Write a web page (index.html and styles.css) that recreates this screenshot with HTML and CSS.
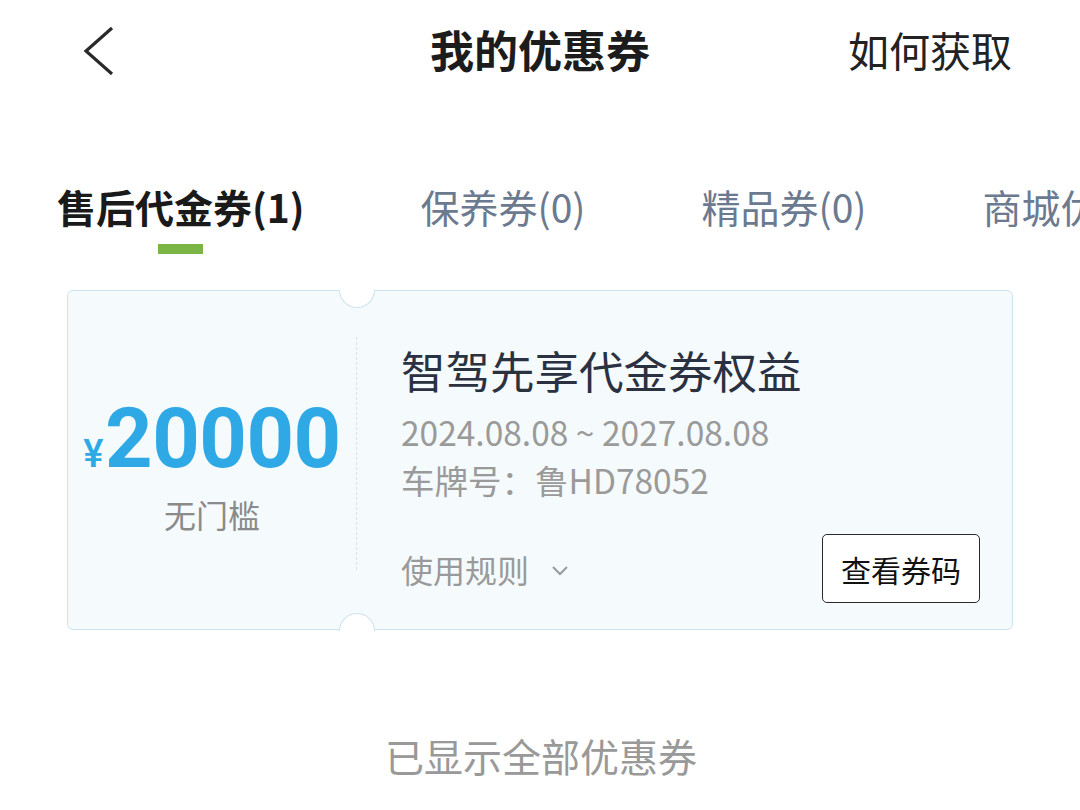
FILE: index.html
```html
<!DOCTYPE html>
<html lang="zh-CN">
<head>
<meta charset="utf-8">
<title>我的优惠券</title>
<link rel="stylesheet" href="styles.css">
</head>
<body>
<div class="page">
  <header class="header">
    <div class="back">
      <svg width="34" height="50" viewBox="0 0 34 50"><polyline points="29,3 3,26 29,49" fill="none" stroke="#2a2a2a" stroke-width="3.2" stroke-linejoin="miter"/></svg>
    </div>
    <h1 class="title">我的优惠券</h1>
    <div class="how">如何获取</div>
  </header>

  <nav class="tabs">
    <div class="tab active">售后代金券(1)<span class="bar"></span></div>
    <div class="tab">保养券(0)</div>
    <div class="tab">精品券(0)</div>
    <div class="tab">商城优惠券(0)</div>
  </nav>

  <section class="card">
    <span class="notch notch-top"></span>
    <span class="notch notch-bottom"></span>
    <div class="card-left">
      <div class="amount"><span class="yen">¥</span>20000</div>
      <div class="cond">无门槛</div>
    </div>
    <div class="divider"></div>
    <div class="card-right">
      <div class="c-title">智驾先享代金券权益</div>
      <div class="c-info c-date">2024.08.08 ~ 2027.08.08</div>
      <div class="c-info">车牌号：鲁HD78052</div>
      <div class="c-bottom">
        <div class="rules">使用规则
          <svg class="arrow" width="18" height="12" viewBox="0 0 18 12"><polyline points="2,2 9,9 16,2" fill="none" stroke="#9a9a9a" stroke-width="2"/></svg>
        </div>
        <button class="btn">查看券码</button>
      </div>
    </div>
  </section>

  <div class="footer">已显示全部优惠券</div>
</div>
</body>
</html>
```

FILE: styles.css
```css
* { box-sizing: border-box; }
html, body {
  margin: 0;
  padding: 0;
  background: #ffffff;
}
body {
  font-family: "Noto Sans CJK SC", "Noto Sans", sans-serif;
  width: 1080px;
  height: 810px;
  overflow: hidden;
}
.page {
  width: 1080px;
}
.header {
  height: 102px;
  display: grid;
  grid-template-columns: 1fr auto 1fr;
  align-items: center;
  padding: 0 68px;
}
.back {
  display: flex;
  align-items: center;
  padding-left: 15px;
  margin-top: -2px;
}
.back svg { display: block; }
.title {
  margin: 0;
  font-size: 44px;
  font-weight: 700;
  color: #1c1c1c;
  line-height: 1.2;
  margin-top: -3px;
}
.how {
  justify-self: end;
  font-size: 41px;
  color: #222222;
  line-height: 1.2;
  margin-top: -3px;
}
.tabs {
  display: flex;
  gap: 116px;
  padding: 81px 0 0 57px;
  white-space: nowrap;
  overflow: hidden;
  align-items: flex-start;
}
.tab {
  font-size: 39px;
  line-height: 47px;
  color: #6c7a90;
  display: flex;
  flex-direction: column;
  align-items: center;
  flex-shrink: 0;
}
.tab.active {
  color: #1a1a1a;
  font-weight: 700;
}
.bar {
  display: block;
  width: 45px;
  height: 10px;
  margin-top: 14px;
  background: #7bb545;
}
.card {
  position: relative;
  margin: 36px 0 0 67px;
  width: 946px;
  height: 340px;
  border: 1.5px solid #cfe3ee;
  border-radius: 6px;
  background: #f5fafd;
  display: flex;
  align-items: stretch;
}
.notch {
  position: absolute;
  left: 271px;
  width: 36px;
  height: 18px;
  background: #ffffff;
  border: 1.5px solid #cfe3ee;
}
.notch-top {
  top: -1.5px;
  border-top: none;
  border-radius: 0 0 18px 18px;
}
.notch-bottom {
  bottom: -1.5px;
  border-bottom: none;
  border-radius: 18px 18px 0 0;
}
.card-left {
  width: 288px;
  display: flex;
  flex-direction: column;
  align-items: center;
  padding-top: 106px;
}
.amount {
  font-family: Roboto, "Liberation Sans", sans-serif;
  font-weight: 700;
  font-size: 83px;
  line-height: 83px;
  color: #2fa9e6;
  letter-spacing: -0.5px;
  white-space: nowrap;
}
.yen {
  font-size: 38px;
  font-weight: 500;
  margin-right: 2px;
}
.cond {
  margin-top: -2px;
  font-size: 32px;
  line-height: 40px;
  color: #8a8a8a;
}
.divider {
  align-self: center;
  height: 233px;
  border-left: 1.5px dashed #d5e3eb;
  margin-top: -14px;
}
.card-right {
  flex: 1;
  padding: 52px 32px 0 44px;
  display: flex;
  flex-direction: column;
}
.c-title {
  font-size: 44.5px;
  line-height: 53px;
  color: #2a3140;
  white-space: nowrap;
}
.c-info {
  font-size: 33.5px;
  line-height: 48px;
  color: #9a9a9a;
  white-space: nowrap;
}
.c-date {
  margin-top: 12px;
}
.c-bottom {
  margin-top: 30px;
  display: flex;
  justify-content: space-between;
  align-items: center;
}
.rules {
  font-size: 32px;
  line-height: 48px;
  color: #9a9a9a;
  display: flex;
  align-items: center;
  gap: 22px;
}
.arrow { display: block; margin-top: 4px; }
.btn {
  width: 158px;
  height: 69px;
  border: 1.5px solid #2a2a2a;
  border-radius: 5px;
  background: #ffffff;
  font-family: "Noto Sans CJK SC", sans-serif;
  font-size: 30px;
  color: #111111;
  padding: 0;
}
.footer {
  margin-top: 100px;
  text-align: center;
  font-size: 39px;
  line-height: 50px;
  color: #999999;
  padding-left: 2px;
}
```
